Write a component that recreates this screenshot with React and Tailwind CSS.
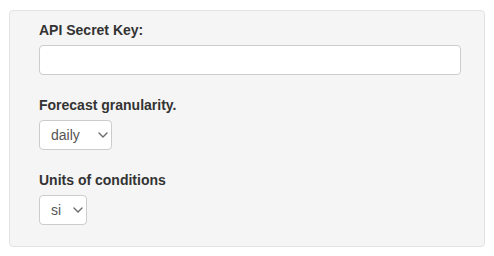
import React, { useState } from 'react';

const Chevron = () => (
  <svg className="pointer-events-none absolute right-[4px] top-1/2 -translate-y-1/2" width="10" height="6" viewBox="0 0 10 6" fill="none">
    <path d="M1 1l4 4 4-4" stroke="#6b6b6b" strokeWidth="1.4" strokeLinecap="round" strokeLinejoin="round" />
  </svg>
);

const SelectBox = ({ value, options, width, onChange }) => (
  <div className={`relative ${width}`}>
    <select
      value={value}
      onChange={(e) => onChange(e.target.value)}
      className="h-[30px] w-full appearance-none rounded-[4px] border border-[#cccccc] bg-white pl-[11px] text-[14px] text-[#555555] outline-none"
    >
      {options.map((o) => (
        <option key={o} value={o}>{o}</option>
      ))}
    </select>
    <Chevron />
  </div>
);

const App = () => {
  const [apiKey, setApiKey] = useState('');
  const [granularity, setGranularity] = useState('daily');
  const [units, setUnits] = useState('si');

  return (
    <div className="min-h-[256px] bg-white pl-[9px] pr-[9px] pt-[10px] font-['Liberation_Sans',Arial,sans-serif] text-[14px] leading-[20px] text-[#333333]">
      <div className="h-[237px] rounded-[4px] border border-[#e3e3e3] bg-[#f5f5f5] pl-[29px] pr-[23px] pt-[9px]">
        <div className="mb-[20px]">
          <label className="mb-[5px] block font-bold">API Secret Key:</label>
          <input
            type="text"
            value={apiKey}
            onChange={(e) => setApiKey(e.target.value)}
            className="block h-[30px] w-full rounded-[4px] border border-[#cccccc] bg-white px-3 text-[14px] text-[#555555] outline-none"
          />
        </div>
        <div className="mb-[20px]">
          <label className="mb-[5px] block font-bold">Forecast granularity.</label>
          <SelectBox value={granularity} options={['daily', 'hourly']} width="w-[73px]" onChange={setGranularity} />
        </div>
        <div>
          <label className="mb-[5px] block font-bold">Units of conditions</label>
          <SelectBox value={units} options={['si', 'us', 'uk', 'ca']} width="w-[48px]" onChange={setUnits} />
        </div>
      </div>
    </div>
  );
};

export default App;
